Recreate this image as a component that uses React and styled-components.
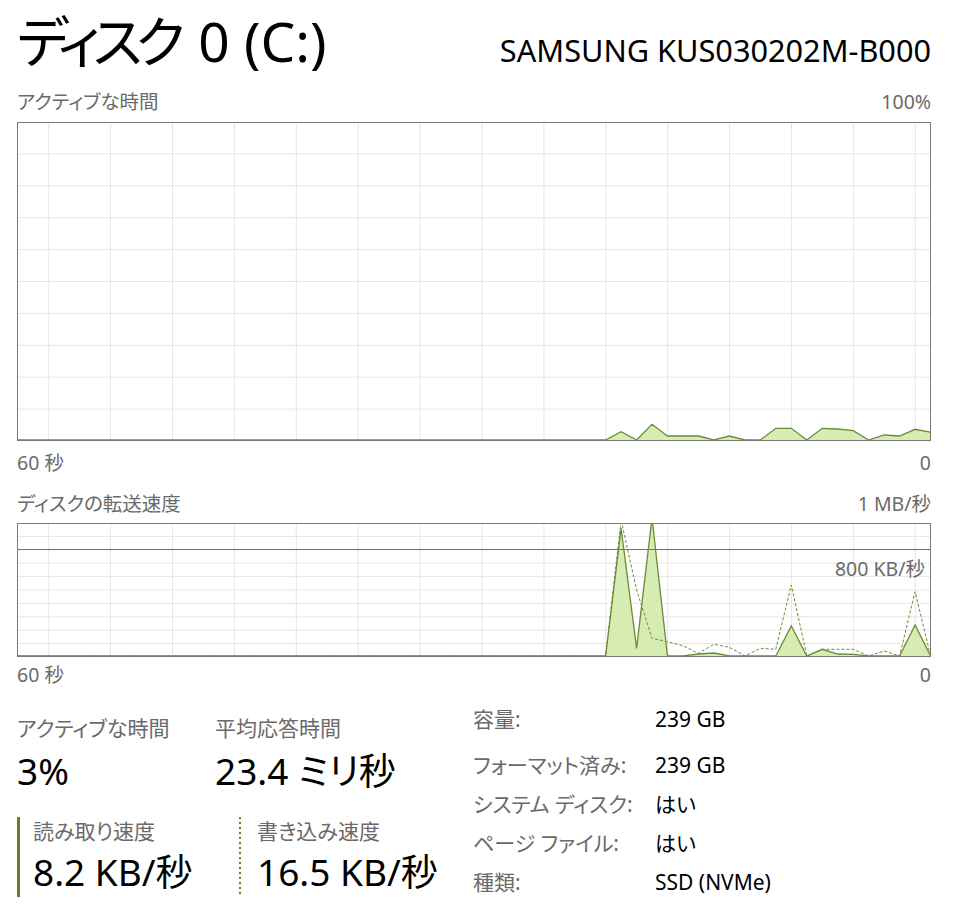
import React from 'react';
import styled, { createGlobalStyle } from 'styled-components';

const GRAY = '#6a6a6a';
const OLIVE = '#647f2c';
const LINE = '#6b8c36';
const FILL = '#d6ecb3';
const GRID = '#e6e6e6';

const GlobalStyle = createGlobalStyle`
  html, body {
    margin: 0;
    padding: 0;
    background: #fff;
  }
  body {
    font-family: "Noto Sans", "Noto Sans CJK JP", sans-serif;
    font-feature-settings: "palt";
    color: #000;
  }
`;

const Panel = styled.div`
  width: 914px;
  padding: 0 30px 0 17px;
`;

const Header = styled.div`
  display: flex;
  justify-content: space-between;
  align-items: baseline;
  height: 82px;
`;

const Title = styled.h1`
  margin: 0;
  font-size: 55px;
  font-weight: 400;
  line-height: 82px;
`;

const Kana = styled.span`
  letter-spacing: -7px;
  margin-right: 6px;
`;

const Model = styled.div`
  font-size: 30.7px;
  line-height: 82px;
`;

const CaptionRow = styled.div`
  display: flex;
  justify-content: space-between;
  height: ${({ $h }) => $h}px;
  line-height: ${({ $h }) => $h}px;
  font-size: 19.5px;
  color: ${GRAY};
`;

const ChartBox = styled.div`
  position: relative;
  height: ${({ $h }) => $h}px;
  border: 1px solid #7a7a7a;
  box-sizing: border-box;
  overflow: hidden;

  svg {
    display: block;
  }
`;

const ChartNote = styled.span`
  position: absolute;
  right: 5px;
  top: 34px;
  font-size: 19.5px;
  line-height: 22px;
  color: ${GRAY};
`;

const Stats = styled.div`
  display: flex;
`;

const Metrics = styled.div`
  width: 456px;
`;

const TopMetrics = styled.div`
  display: grid;
  grid-template-columns: 198px auto;
  padding-top: 21px;
`;

const MetricLabel = styled.div`
  font-size: 21px;
  line-height: 28px;
  color: ${GRAY};
`;

const MetricValue = styled.div`
  margin-top: 6px;
  font-size: 37px;
  line-height: 46px;
`;

const RateRow = styled.div`
  display: flex;
  margin-top: 23px;
  height: 80px;
`;

const RateBlock = styled.div`
  width: ${({ $w }) => $w}px;
  box-sizing: border-box;
  padding-left: ${({ $dotted }) => ($dotted ? 18 : 16)}px;
  ${({ $dotted }) =>
    $dotted
      ? `background: repeating-linear-gradient(to bottom, ${OLIVE} 0 2px, transparent 2px 5px) left top / 2px 100% no-repeat;`
      : `border-left: 3px solid ${OLIVE}; padding-left: 13px;`}

  ${MetricValue} {
    margin-top: 4px;
  }
`;

const InfoTable = styled.div`
  display: grid;
  grid-template-columns: 182px auto;
  grid-template-rows: 46px repeat(4, 39px);
  align-items: start;
  padding-top: 7px;
  font-size: 21px;
  line-height: 39px;
`;

const InfoLabel = styled.div`
  color: ${GRAY};
`;

const InfoValue = styled.div`
  color: #000;
`;

const activity = [0, 8.3, 0, 15.7, 4, 4, 4, 0, 4, 0, 0, 11.7, 11.7, 0, 11.7, 11, 9.3, 0, 5, 4, 10.7, 7.7];
const reads = [0, 127.7, 7.7, 138, 0, 0, 2, 3, 0, 0, 0, 0, 30, 0, 6.7, 2, 1.7, 0, 0, 0, 31, 0];
const writes = [0, 136, 66, 17.7, 14.3, 10.3, 2.7, 11.7, 8.7, 0, 7.7, 6.7, 71, 0, 6.7, 6.7, 6.7, 0, 5, 0, 64.3, 0];

const W = 912;
const xAt = (i) => 587.6 + 15.475 * i;

function toPoints(values, base) {
  const pts = [[0, base]];
  values.forEach((v, i) => pts.push([xAt(i), base - v]));
  return pts.map(([x, y]) => `${x.toFixed(1)},${y.toFixed(1)}`).join(' ');
}

function Grid({ h, rows }) {
  const verticals = Array.from({ length: 15 }, (_, k) => 30.7 + 61.9 * k);
  const step = (h + 2) / rows;
  const horizontals = Array.from({ length: rows - 1 }, (_, k) => step * (k + 1) - 1);
  return (
    <g stroke={GRID} strokeWidth="1">
      {verticals.map((x) => (
        <line key={`v${x}`} x1={x} x2={x} y1="0" y2={h} />
      ))}
      {horizontals.map((y) => (
        <line key={`h${y}`} x1="0" x2={W} y1={y} y2={y} />
      ))}
    </g>
  );
}

function ActivityChart() {
  const h = 317;
  const pts = toPoints(activity, h);
  return (
    <ChartBox $h={319}>
      <svg width={W} height={h}>
        <Grid h={h} rows={10} />
        <polygon points={`${pts} ${W},${h}`} fill={FILL} />
        <polyline points={pts} fill="none" stroke={LINE} strokeWidth="1.3" />
      </svg>
    </ChartBox>
  );
}

function TransferChart() {
  const h = 132;
  const readPts = toPoints(reads, h);
  const writePts = toPoints(writes, h);
  return (
    <ChartBox $h={134}>
      <svg width={W} height={h}>
        <Grid h={h} rows={10} />
        <polygon points={`${readPts} ${W},${h}`} fill={FILL} />
        <polyline points={readPts} fill="none" stroke={LINE} strokeWidth="1.3" />
        <polyline
          points={writePts}
          fill="none"
          stroke={LINE}
          strokeWidth="1"
          strokeDasharray="3 2"
        />
        <line x1="0" x2={W} y1="25.5" y2="25.5" stroke="#6a8a1c" strokeWidth="1.2" />
      </svg>
      <ChartNote>800 KB/秒</ChartNote>
    </ChartBox>
  );
}

const info = [
  ['容量:', '239 GB'],
  ['フォーマット済み:', '239 GB'],
  ['システム ディスク:', 'はい'],
  ['ページ ファイル:', 'はい'],
  ['種類:', 'SSD (NVMe)'],
];

export default function App() {
  return (
    <>
      <GlobalStyle />
      <Panel>
        <Header>
          <Title>
            <Kana>ディスク</Kana> 0 (C:)
          </Title>
          <Model>SAMSUNG KUS030202M-B000</Model>
        </Header>

        <CaptionRow $h={40}>
          <span>アクティブな時間</span>
          <span>100%</span>
        </CaptionRow>
        <ActivityChart />
        <CaptionRow $h={43}>
          <span>60 秒</span>
          <span>0</span>
        </CaptionRow>

        <CaptionRow $h={39}>
          <span>ディスクの転送速度</span>
          <span>1 MB/秒</span>
        </CaptionRow>
        <TransferChart />
        <CaptionRow $h={36}>
          <span>60 秒</span>
          <span>0</span>
        </CaptionRow>

        <Stats>
          <Metrics>
            <TopMetrics>
              <div>
                <MetricLabel>アクティブな時間</MetricLabel>
                <MetricValue>3%</MetricValue>
              </div>
              <div>
                <MetricLabel>平均応答時間</MetricLabel>
                <MetricValue>23.4 ミリ秒</MetricValue>
              </div>
            </TopMetrics>
            <RateRow>
              <RateBlock $w={222}>
                <MetricLabel>読み取り速度</MetricLabel>
                <MetricValue>8.2 KB/秒</MetricValue>
              </RateBlock>
              <RateBlock $w={220} $dotted>
                <MetricLabel>書き込み速度</MetricLabel>
                <MetricValue>16.5 KB/秒</MetricValue>
              </RateBlock>
            </RateRow>
          </Metrics>
          <InfoTable>
            {info.map(([label, value]) => (
              <React.Fragment key={label}>
                <InfoLabel>{label}</InfoLabel>
                <InfoValue>{value}</InfoValue>
              </React.Fragment>
            ))}
          </InfoTable>
        </Stats>
      </Panel>
    </>
  );
}
